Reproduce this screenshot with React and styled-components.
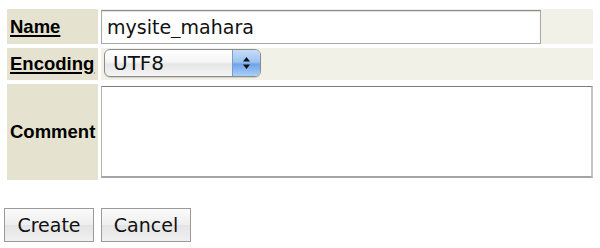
import { createGlobalStyle, styled } from "styled-components"

const GlobalStyle = createGlobalStyle`
    html, body {
        margin: 0;
        padding: 0;
        background: #ffffff;
    }
`

export default function App(){
    return(
        <Page>
            <GlobalStyle/>
            <FormTable>
                <LabelCell><LabelLink>Name</LabelLink></LabelCell>
                <ValueCell>
                    <TextInput defaultValue="mysite_mahara"/>
                </ValueCell>

                <LabelCell><LabelLink>Encoding</LabelLink></LabelCell>
                <ValueCell $pad="1px 0 0 3px">
                    <PopUp>
                        <PopUpText>UTF8</PopUpText>
                        <Stepper>
                            <svg width="9" height="14" viewBox="0 0 9 14">
                                <path d="M4.5 1 L8 5.5 L1 5.5 Z" fill="#111"/>
                                <path d="M4.5 13 L8 8.5 L1 8.5 Z" fill="#111"/>
                            </svg>
                        </Stepper>
                    </PopUp>
                </ValueCell>

                <LabelCell><LabelText>Comment</LabelText></LabelCell>
                <ValueCell $bg="#ffffff" $pad="2px 0 0 0">
                    <TextArea/>
                </ValueCell>
            </FormTable>

            <Buttons>
                <Button>Create</Button>
                <Button>Cancel</Button>
            </Buttons>
        </Page>
    )
}

const Page = styled.div`
    padding: 9px 0 0 0;
    width: 600px;
    height: 248px;
    box-sizing: border-box;
`
const FormTable = styled.div`
    display: grid;
    grid-template-columns: 91px 492px;
    grid-template-rows: 35px 32px 96px;
    column-gap: 3px;
    row-gap: 4px;
    margin-left: 7px;
`
const LabelCell = styled.div`
    background-color: #e5e3cf;
    display: flex;
    align-items: center;
    padding-left: 3px;
    font-family: 'Liberation Sans', Arial, sans-serif;
    font-weight: 700;
    font-size: 18.5px;
    color: #000;
`
const LabelLink = styled.span`
    text-decoration: underline;
    text-decoration-thickness: 2px;
    text-underline-offset: 2px;
`
const LabelText = styled.span``

const ValueCell = styled.div`
    background-color: ${props => props.$bg || "#f2f1e8"};
    padding: ${props => props.$pad || "1px 0 0 0"};
    box-sizing: border-box;
    display: flex;
    align-items: flex-start;
`
const TextInput = styled.input`
    width: 440px;
    height: 34px;
    box-sizing: border-box;
    border: 1px solid #a8a8a8;
    border-top-color: #8a8a8a;
    box-shadow: inset 0 1px 1px rgba(0,0,0,0.12);
    padding: 0 5px;
    font-family: 'DejaVu Sans', 'Lucida Grande', sans-serif;
    font-size: 19px;
    color: #111;
    outline: none;
    background: #fff;
`
const PopUp = styled.div`
    width: 157px;
    height: 28px;
    box-sizing: border-box;
    border: 1px solid #8c8c8c;
    border-radius: 6px;
    background: linear-gradient(#ffffff, #f6f6f6 45%, #e6e6e6 55%, #f4f4f4);
    display: flex;
    align-items: center;
    justify-content: space-between;
    overflow: hidden;
    box-shadow: 0 1px 1px rgba(0,0,0,0.15);
`
const PopUpText = styled.span`
    font-family: 'DejaVu Sans', 'Lucida Grande', sans-serif;
    font-size: 20px;
    color: #111;
    padding-left: 8px;
`
const Stepper = styled.div`
    width: 27px;
    height: 100%;
    border-left: 1px solid #7d9bc9;
    background: linear-gradient(#c6dcf7, #9ec4f0 45%, #6fa4e8 55%, #a9d0fa);
    display: flex;
    align-items: center;
    justify-content: center;
`
const TextArea = styled.textarea`
    width: 492px;
    height: 92px;
    box-sizing: border-box;
    border: 1px solid #b5b5b5;
    border-top-color: #7c7c7c;
    border-right: 2px solid #c4c4c4;
    border-bottom: 2px solid #a4a4a4;
    resize: none;
    outline: none;
    background: #fff;
    margin: 0;
`
const Buttons = styled.div`
    display: flex;
    gap: 7px;
    margin: 28px 0 0 4px;
`
const Button = styled.button`
    width: 90px;
    height: 34px;
    box-sizing: border-box;
    border: 1px solid #9a9a9a;
    border-radius: 0;
    background: linear-gradient(#fbfbfb, #eeeeee 50%, #e4e4e4 51%, #f0f0f0);
    font-family: 'DejaVu Sans', 'Lucida Grande', sans-serif;
    font-size: 19px;
    color: #111;
    padding: 0;
`
